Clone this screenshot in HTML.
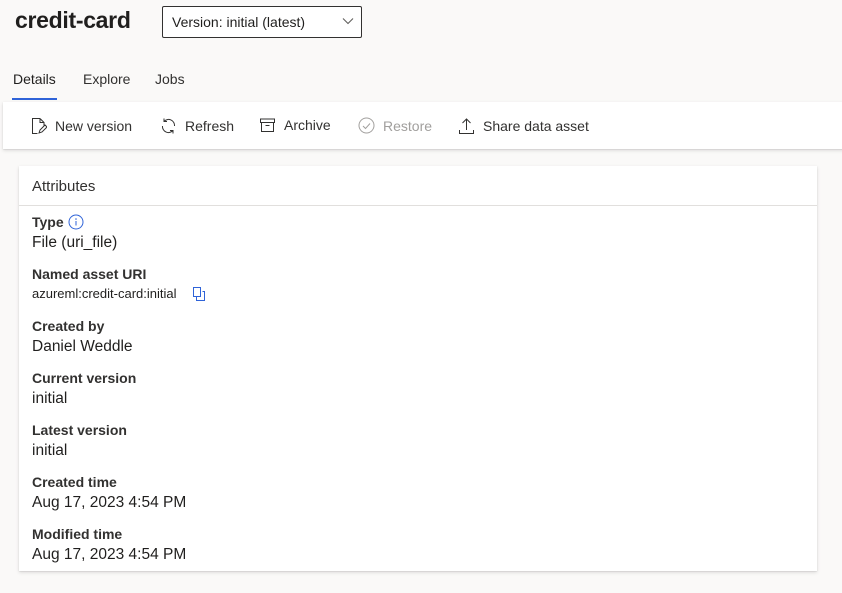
<!DOCTYPE html><html><head><style>
body{margin:0;width:842px;height:593px;background:#faf9f8;font-family:"Liberation Sans",sans-serif;color:#201f1e;position:relative;overflow:hidden}
.a{position:absolute;white-space:nowrap}
.tb{position:absolute;left:3px;top:102px;width:845px;height:47px;background:#fff;box-shadow:0 1.6px 3.6px rgba(0,0,0,.13),0 .3px .9px rgba(0,0,0,.11)}
.ti{position:absolute;top:117px;font-size:14px;color:#323130;display:flex;align-items:center;gap:8px}
.card{position:absolute;left:19px;top:166px;width:798px;height:405px;background:#fff;box-shadow:0 1.6px 3.6px rgba(0,0,0,.13),0 .3px .9px rgba(0,0,0,.11)}
.l{font-size:14px;font-weight:bold;color:#323130;left:32px}
.v{font-size:15.5px;left:32px;color:#201f1e}
</style></head><body>
<div class="a" style="left:15px;top:7px;font-size:23px;font-weight:bold;letter-spacing:-0.3px">credit-card</div>
<div class="a" style="left:162px;top:6px;width:200px;height:32px;border:1px solid #323130;border-radius:2px;background:#fff;font-size:14px;line-height:30px;box-sizing:border-box;padding-left:9px">Version: initial (latest)
<svg style="position:absolute;right:7px;top:10px" width="12" height="8" viewBox="0 0 12 8"><path d="M1 1.5l5 5 5-5" fill="none" stroke="#605e5c" stroke-width="1.1"/></svg></div>
<div class="a" style="left:13px;top:71px;font-size:14px">Details</div>
<div style="position:absolute;left:12px;top:98px;width:45px;height:2px;background:#2f63d8"></div>
<div class="a" style="left:83px;top:71px;font-size:14px;color:#323130">Explore</div>
<div class="a" style="left:155px;top:71px;font-size:14px;color:#323130">Jobs</div>
<div class="tb"></div>
<div class="ti" style="left:30px"><svg width="17" height="18" viewBox="0 0 17 18" fill="none" stroke="#323130" stroke-width="1"><path d="M10 1.5H2.5v15h5M10 1.5v4h4v3M10 1.5l4 4"/><path d="M9 16l1-3 5-5 2 2-5 5z"/></svg>New version</div>
<div class="ti" style="left:160px"><svg width="17" height="18" viewBox="0 0 17 18" fill="none" stroke="#323130" stroke-width="1"><path d="M4 4.5A6 6 0 0 1 14.5 9M13 13.5A6 6 0 0 1 2.5 9"/><path d="M4 1.5v3h3M13 16.5v-3h-3"/></svg>Refresh</div>
<div class="ti" style="left:259px"><svg width="17" height="16" viewBox="0 0 17 16" fill="none" stroke="#323130" stroke-width="1"><rect x="1.5" y="2" width="14" height="3.5"/><path d="M2.5 5.5v9h12v-9M6.5 8.5h4"/></svg>Archive</div>
<div class="ti" style="left:358px;color:#a19f9d"><svg width="17" height="17" viewBox="0 0 17 17" fill="none" stroke="#a19f9d" stroke-width="1"><circle cx="8.5" cy="8.5" r="7.5"/><path d="M5 9l2.5 2.5L12 6.5"/></svg>Restore</div>
<div class="ti" style="left:458px"><svg width="17" height="18" viewBox="0 0 17 18" fill="none" stroke="#323130" stroke-width="1"><path d="M8.5 13V2M4.5 6l4-4 4 4M1.5 13v3.5h14V13"/></svg>Share data asset</div>
<div class="card"></div>
<div class="a" style="left:32px;top:178px;font-size:15px;color:#323130">Attributes</div>
<div style="position:absolute;left:19px;top:205px;width:798px;height:1px;background:#e1dfdd"></div>
<div class="a l" style="top:214px">Type</div>
<svg class="a" style="left:68px;top:214px" width="16" height="16" viewBox="0 0 16 16"><circle cx="8" cy="8" r="7" fill="none" stroke="#2f63d8"/><path d="M8 7v4.5" stroke="#2f63d8"/><circle cx="8" cy="5" r=".8" fill="#2f63d8"/></svg>
<div class="a v" style="top:234px">File (uri_file)</div>
<div class="a l" style="top:266px">Named asset URI</div>
<div class="a" style="left:32px;top:286px;font-size:13px">azureml:credit-card:initial</div>
<svg class="a" style="left:193px;top:287px" width="12" height="14" viewBox="0 0 12 14" fill="none" stroke="#2f63d8"><rect x="0.5" y="0.5" width="7" height="9"/><path d="M3.5 10v3.5h8v-9h-2"/></svg>
<div class="a l" style="top:318px">Created by</div>
<div class="a v" style="top:338px">Daniel Weddle</div>
<div class="a l" style="top:370px">Current version</div>
<div class="a v" style="top:390px">initial</div>
<div class="a l" style="top:422px">Latest version</div>
<div class="a v" style="top:442px">initial</div>
<div class="a l" style="top:474px">Created time</div>
<div class="a v" style="top:494px">Aug 17, 2023 4:54 PM</div>
<div class="a l" style="top:526px">Modified time</div>
<div class="a v" style="top:546px">Aug 17, 2023 4:54 PM</div>
</body></html>
